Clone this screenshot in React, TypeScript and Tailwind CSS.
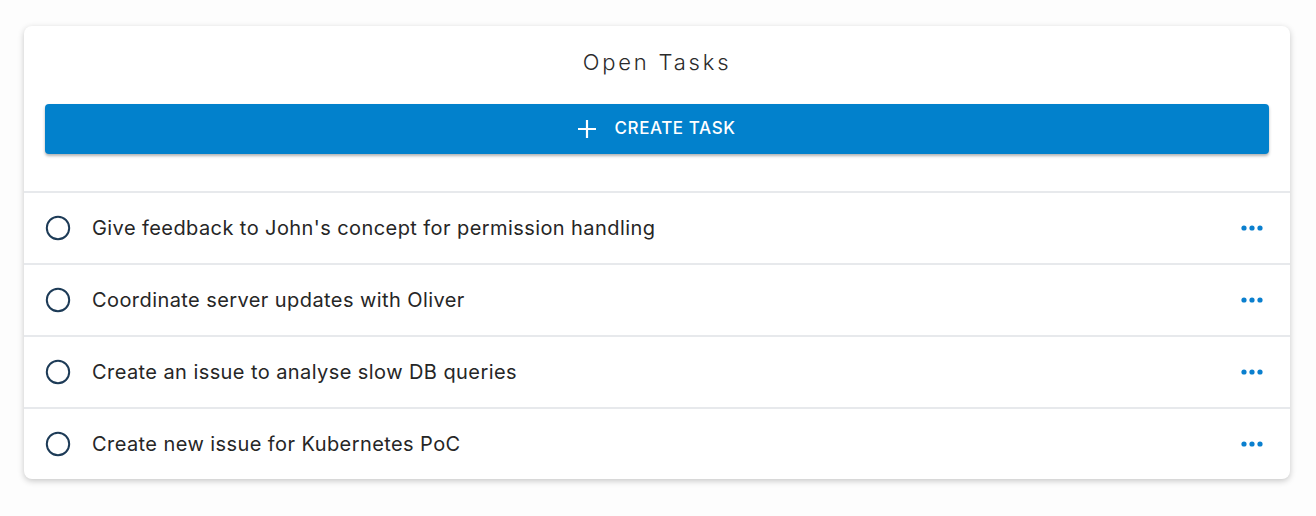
import React from "react";

const tasks = [
  "Give feedback to John's concept for permission handling",
  "Coordinate server updates with Oliver",
  "Create an issue to analyse slow DB queries",
  "Create new issue for Kubernetes PoC",
];

export default function App() {
  return (
    <div className="w-[1316px] h-[516px] bg-[#fdfdfd] pt-[26px] px-[24px]" style={{ fontFamily: "Inter, 'Noto Sans', sans-serif" }}>
      <div className="w-[1266px] bg-white rounded-[8px] shadow-[0_2px_6px_rgba(0,0,0,0.22)] overflow-hidden">
        <div className="h-[72px] flex items-center justify-center">
          <h1 className="text-[22px] font-light tracking-[2.8px] text-[#2b2b2b] leading-none">Open Tasks</h1>
        </div>
        <div className="px-[21px] pt-[6px]">
          <button className="w-full h-[50px] rounded-[4px] bg-[#0281cc] shadow-[0_2px_3px_rgba(0,0,0,0.3)] flex items-center justify-center gap-[18px] text-white">
            <svg width="18" height="18" viewBox="0 0 18 18" fill="none" stroke="white" strokeWidth="2.2">
              <path d="M9 0v18M0 9h18" />
            </svg>
            <span className="text-[17px] font-medium tracking-[0.6px]">CREATE TASK</span>
          </button>
        </div>
        <div className="mt-[37px]">
          {tasks.map((t) => (
            <div key={t} className="h-[72px] border-t-2 border-[#e7e9ec] flex items-center pl-[21px] pr-[27px]">
              <svg width="26" height="26" viewBox="0 0 26 26" className="shrink-0">
                <circle cx="13" cy="13" r="11.2" fill="none" stroke="#1d3b57" strokeWidth="2" />
              </svg>
              <span className="ml-[21px] text-[20px] text-[#262626] tracking-[0.42px] flex-1">{t}</span>
              <svg width="22" height="6" viewBox="0 0 22 6" fill="#0a7fce">
                <circle cx="3" cy="3" r="2.6" />
                <circle cx="11" cy="3" r="2.6" />
                <circle cx="19" cy="3" r="2.6" />
              </svg>
            </div>
          ))}
        </div>
      </div>
    </div>
  );
}
